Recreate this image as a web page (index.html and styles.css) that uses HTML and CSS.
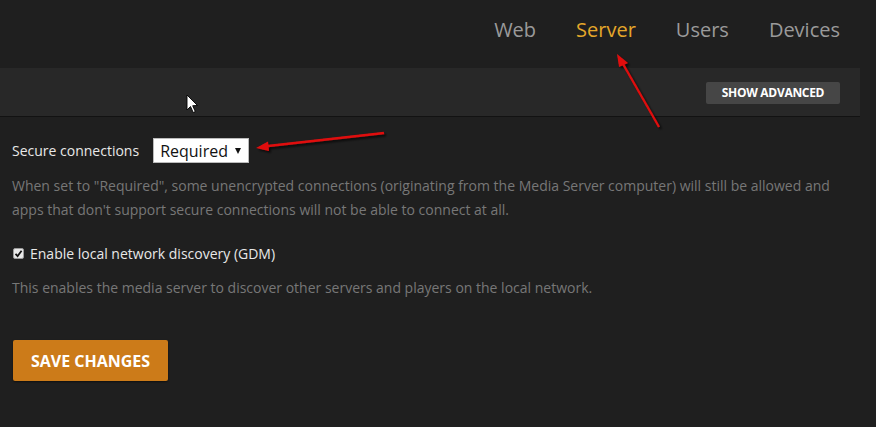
FILE: index.html
```html
<!DOCTYPE html>
<html>
<head>
<meta charset="utf-8">
<link rel="stylesheet" href="styles.css">
</head>
<body>
<div class="page">
  <nav class="tabs">
    <span class="tab">Web</span>
    <span class="tab active">Server</span>
    <span class="tab">Users</span>
    <span class="tab">Devices</span>
  </nav>
  <div class="toolbar">
    <button class="btn-advanced">SHOW ADVANCED</button>
  </div>
  <div class="content">
    <div class="field-row">
      <label class="field-label">Secure connections</label>
      <div class="select">
        <span>Required</span>
        <span class="caret"></span>
      </div>
    </div>
    <p class="help">When set to "Required", some unencrypted connections (originating from the Media Server computer) will still be allowed and apps that don't support secure connections will not be able to connect at all.</p>
    <div class="check-row">
      <span class="checkbox">
        <svg width="11" height="11" viewBox="0 0 11 11"><rect x="0.5" y="0.5" width="10" height="10" rx="1.5" fill="#e8e8e8" stroke="#9a9a9a"/><path d="M2.5 5.8 L4.6 8 L8.6 2.8" fill="none" stroke="#111" stroke-width="1.8"/></svg>
      </span>
      <span class="check-label">Enable local network discovery (GDM)</span>
    </div>
    <p class="help">This enables the media server to discover other servers and players on the local network.</p>
    <button class="btn-save">SAVE CHANGES</button>
  </div>

  <svg class="overlay" width="876" height="427" viewBox="0 0 876 427">
    <defs>
      <filter id="sh" x="-20%" y="-20%" width="140%" height="140%">
        <feDropShadow dx="2" dy="2" stdDeviation="1.2" flood-color="#000" flood-opacity="0.7"/>
      </filter>
    </defs>
    <g filter="url(#sh)">
      <line x1="659" y1="127" x2="623" y2="64" stroke="#e01010" stroke-width="2.2"/>
      <polygon points="617,54 628,63 619,67" fill="#e01010"/>
      <line x1="384" y1="133" x2="268" y2="146" stroke="#e01010" stroke-width="2.4"/>
      <polygon points="256,148 268,141.5 269,151" fill="#e01010"/>
    </g>
    <path d="M187 95 L187 110 L190.5 106.5 L193.2 112.5 L195.3 111.6 L192.7 105.7 L197.5 105.5 Z" fill="#fff" stroke="#000" stroke-width="0.9"/>
  </svg>
</div>
</body>
</html>
```

FILE: styles.css
```css
html, body {
  margin: 0;
  padding: 0;
  background: #1f1f1f;
}
body {
  font-family: "Open Sans", "DejaVu Sans", sans-serif;
  width: 876px;
  height: 427px;
  overflow: hidden;
}
.page {
  position: relative;
  width: 876px;
  height: 427px;
}
.tabs {
  display: flex;
  justify-content: flex-end;
  gap: 40px;
  height: 68px;
  box-sizing: border-box;
  padding: 16px 36px 0 0;
}
.tab {
  font-size: 20px;
  line-height: 27px;
  color: #9a9a9a;
}
.tab.active {
  color: #e5a72a;
}
.toolbar {
  width: 860px;
  height: 49px;
  box-sizing: border-box;
  background: #282828;
  border-bottom: 1px solid #121212;
  display: flex;
  align-items: center;
  justify-content: flex-end;
  padding-right: 20px;
}
.btn-advanced {
  background: #464646;
  color: #fff;
  border: none;
  border-radius: 2px;
  font-family: "Open Sans", sans-serif;
  font-weight: 700;
  font-size: 12px;
  letter-spacing: -0.3px;
  height: 22px;
  width: 134px;
  padding: 0;
  margin-top: 1px;
}
.content {
  padding: 21px 0 0 12px;
}
.field-row {
  display: flex;
  align-items: center;
  gap: 14px;
  height: 25px;
}
.field-label {
  font-size: 14px;
  color: #e8e8e8;
}
.select {
  display: flex;
  align-items: center;
  justify-content: space-between;
  box-sizing: border-box;
  width: 96px;
  height: 25px;
  background: #fff;
  border: 1px solid #bbb;
  padding: 0 7px 0 6px;
  font-size: 16px;
  color: #111;
}
.caret {
  width: 0;
  height: 0;
  border-left: 3px solid transparent;
  border-right: 3px solid transparent;
  border-top: 6px solid #111;
  margin-top: 1px;
}
.help {
  margin: 11px 0 0 0;
  font-size: 14px;
  line-height: 24px;
  color: #777;
  width: 836px;
}
.check-row {
  display: flex;
  align-items: center;
  gap: 6px;
  margin-top: 21px;
  height: 20px;
}
.checkbox {
  display: flex;
  margin-left: 1px;
}
.check-label {
  font-size: 14px;
  color: #e8e8e8;
}
.check-row + .help {
  margin-top: 13px;
}
.btn-save {
  display: block;
  margin: 40px 0 0 1px;
  width: 155px;
  height: 41px;
  background: #cc7b19;
  color: #fff;
  border: none;
  border-radius: 2px;
  font-family: "Open Sans", sans-serif;
  font-weight: 700;
  font-size: 16px;
  padding: 0;
  box-shadow: 0 1px 2px rgba(0,0,0,0.5);
}
.overlay {
  position: absolute;
  left: 0;
  top: 0;
  pointer-events: none;
}
```
